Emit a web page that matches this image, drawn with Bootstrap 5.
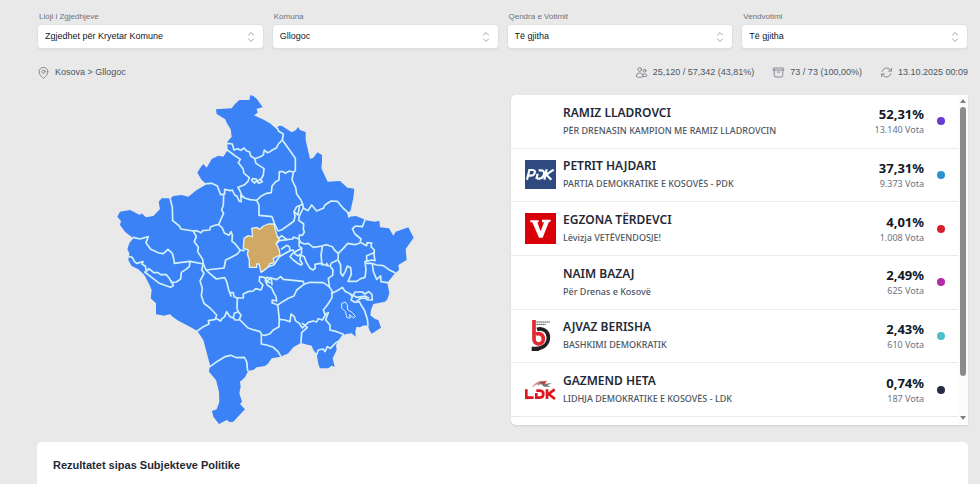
<!DOCTYPE html>
<html lang="sq">
<head>
<meta charset="utf-8">
<meta name="viewport" content="width=device-width, initial-scale=1">
<title>Rezultatet e zgjedhjeve – Gllogoc</title>
<link href="https://cdn.jsdelivr.net/npm/bootstrap@5.3.0/dist/css/bootstrap.min.css" rel="stylesheet">
<style>
  body { background: #e9e9e9; font-family: "Liberation Sans", Arial, sans-serif; color: #111827; }
  .page { padding: 11px 12px 0 37px; }
  .filter-label { font-size: 8px; line-height: 12px; color: #6b7280; padding-left: 2px; margin-bottom: 1px; display: block; }
  .filter-select {
    --bs-form-select-bg-img: url("data:image/svg+xml,%3Csvg xmlns='http://www.w3.org/2000/svg' viewBox='0 0 12 12' fill='none' stroke='%239ca3af' stroke-linecap='round' stroke-linejoin='round'%3E%3Cpath d='M3.5 4 6 1.5 8.500 4M3.500 8 6 10.500 8.500 8'/%3E%3C/svg%3E");
    font-size: 9px; line-height: 15px; padding: 4px 24px 4px 7px; color: #111827;
    border: 1px solid #dfe0e2; border-radius: 4px; background-size: 12px 12px; background-position: right 6px center;
    box-shadow: 0 1px 1px rgba(0,0,0,.06);
  }
  .info { font-size: 9px; line-height: 14px; color: #4b5563; padding: 16px 0; }
  .info svg { width: 13px; height: 13px; margin-right: 5px; fill: none; stroke: #6b7280; stroke-width: 1.5; stroke-linecap: round; stroke-linejoin: round; }
  .stats { gap: 18px; }
  .map-col { flex: 0 1 474px; min-width: 0; }
  .map-svg { width: 310px; max-width: 100%; height: auto; margin: -5px 0 0 73px; display: block; }
  .land { fill: #3b82f6; }
  .borders { fill: none; stroke: #d3f1fb; stroke-width: 5; stroke-linejoin: round; stroke-linecap: round; }
  .enclave { stroke-width: 3; }
  .chosen { fill: #d1a964; stroke: #e2f1ee; stroke-width: 4; stroke-linejoin: round; }
  .panel { background: #fff; border-radius: 5px 0 0 5px; box-shadow: 0 1px 2px rgba(0,0,0,.12); height: 330px; overflow: hidden; font-family: "Noto Sans", "Open Sans", sans-serif; }
  .results { display: grid; grid-auto-rows: 1fr; min-height: 322px; align-self: flex-start; }
  .result { border-bottom: 1px solid #e8eaed; padding: 0 13px 0 14px; }
  .logo { width: 31px; height: 31px; flex: none; margin-right: 7px; }
  .cand { font-size: 12px; line-height: 17px; font-weight: 600; color: #1f2937; }
  .party { font-size: 9px; line-height: 13px; font-weight: 500; color: #4b5563; padding: 3px 0 2px; }
  .pct { font-size: 13px; line-height: 16px; font-weight: 700; color: #111827; }
  .votes { font-size: 9px; line-height: 13px; color: #6b7280; padding-top: 1px; }
  .dot { width: 8px; height: 8px; border-radius: 50%; flex: none; margin-left: 13px; }
  .dot-violet { background: #673bd0; } .dot-blue { background: #2a93cf; } .dot-red { background: #d81e2c; }
  .dot-magenta { background: #b32ba8; } .dot-cyan { background: #4bc0cb; } .dot-navy { background: #252d45; }
  .scroll-rail { width: 10px; background: #fcfcfc; padding: 4px 0 5px; }
  .scroll-rail svg { width: 6px; height: 4px; fill: #808080; }
  .thumb { width: 6px; background: #8b8b8b; border-radius: 3px; flex: 0 0 269px; margin-top: 4px; }
  .bottom-card { background: #fff; border-radius: 5px 5px 0 0; margin-top: 12px; padding: 15px 16px 8px; }
  .bottom-card h2 { font-size: 11px; line-height: 16px; font-weight: 700; margin: 0; color: #1f2937; }
</style>
</head>
<body>
<main class="page d-flex flex-column min-vh-100">
  <form class="d-flex gap-2">
    <div class="flex-fill w-100">
      <label class="filter-label" for="lloji">Lloji i Zgjedhjeve</label>
      <select class="form-select filter-select" id="lloji"><option>Zgjedhet për Kryetar Komune</option></select>
    </div>
    <div class="flex-fill w-100">
      <label class="filter-label" for="komuna">Komuna</label>
      <select class="form-select filter-select" id="komuna"><option>Gllogoc</option></select>
    </div>
    <div class="flex-fill w-100">
      <label class="filter-label" for="qendra">Qendra e Votimit</label>
      <select class="form-select filter-select" id="qendra"><option>Të gjitha</option></select>
    </div>
    <div class="flex-fill w-100">
      <label class="filter-label" for="vendvotimi">Vendvotimi</label>
      <select class="form-select filter-select" id="vendvotimi"><option>Të gjitha</option></select>
    </div>
  </form>

  <div class="info d-flex justify-content-between align-items-center">
    <div class="d-flex align-items-center">
      <svg viewBox="0 0 24 24"><path d="M15 10.500a3 3 0 1 1-6 0 3 3 0 0 1 6 0Z"/><path d="M20 10.500c0 7-8 12-8 12s-8-5-8-12a8 8 0 0 1 16 0Z"/></svg>
      <span>Kosova &gt; Gllogoc</span>
    </div>
    <div class="stats d-flex align-items-center">
      <div class="d-flex align-items-center">
        <svg viewBox="0 0 24 24"><path d="M15 19.128a9.380 9.380 0 0 0 2.625.372 9.337 9.337 0 0 0 4.121-.952 4.125 4.125 0 0 0-7.533-2.493M15 19.128v-.003c0-1.113-.285-2.160-.786-3.070M15 19.128v.106A12.318 12.318 0 0 1 8.624 21c-2.331 0-4.512-.645-6.374-1.766l-.001-.109a6.375 6.375 0 0 1 11.964-3.070M12 6.375a3.375 3.375 0 1 1-6.750 0 3.375 3.375 0 0 1 6.750 0Zm8.250 2.250a2.625 2.625 0 1 1-5.250 0 2.625 2.625 0 0 1 5.250 0Z"/></svg>
        <span>25,120 / 57,342 (43,81%)</span>
      </div>
      <div class="d-flex align-items-center">
        <svg viewBox="0 0 24 24"><path d="m20.250 7.500-.625 10.632a2.250 2.250 0 0 1-2.247 2.118H6.622a2.250 2.250 0 0 1-2.247-2.118L3.750 7.500M10 11.250h4M3.375 7.500h17.250c.621 0 1.125-.504 1.125-1.125v-1.500c0-.621-.504-1.125-1.125-1.125H3.375c-.621 0-1.125.504-1.125 1.125v1.500c0 .621.504 1.125 1.125 1.125Z"/></svg>
        <span>73 / 73 (100,00%)</span>
      </div>
      <div class="d-flex align-items-center">
        <svg viewBox="0 0 24 24"><path d="M16.023 9.348h4.992V4.356M2.985 19.644v-4.992h4.992M2.985 14.652l3.181 3.183a8.250 8.250 0 0 0 13.803-3.700M4.031 9.865a8.250 8.250 0 0 1 13.803-3.700l3.181 3.182"/></svg>
        <span>13.10.2025 00:09</span>
      </div>
    </div>
  </div>

  <div class="d-flex">
    <div class="map-col">
      <svg class="map-svg" viewBox="0 0 930 1020" role="img" aria-label="Harta e komunave">
        <path class="land" d="M418 30 421 15 430 18 440 26 458 52 440 56 443 68 432 76 458 88 480 100 500 118 505 108 515 107 530 117 545 127 558 120 564 111 570 120 587 126 587 150 600 207 610 203 622 187 636 195 636 215 634 235 653 275 690 273 712 293 733 296 730 325 721 364 712 367 718 380 738 378 755 385 767 391 795 395 808 392 810 412 837 415 850 437 857 425 895 412 911 443 887 477 890 510 865 525 867 540 855 550 832 578 838 610 832 628 825 635 790 642 783 660 781 676 795 687 805 690 813 713 785 731 778 720 774 706 758 707 750 712 740 710 736 722 737 740 725 730 705 733 690 748 678 765 680 780 668 805 674 830 665 827 655 835 630 835 625 822 620 792 610 780 605 767 572 759 550 772 535 790 512 800 485 805 475 820 465 828 440 832 430 840 415 842 405 862 390 875 392 890 388 910 396 935 390 942 405 958 388 976 370 995 360 997 350 990 327 1002 310 980 306 963 320 958 328 935 327 905 318 870 297 845 300 825 292 795 280 750 262 723 245 713 205 692 188 680 180 673 160 677 152 675 138 673 138 640 122 625 125 600 116 580 103 555 85 538 65 528 55 510 58 490 52 478 58 460 70 445 45 425 30 405 33 393 22 380 30 365 60 360 90 375 95 370 108 382 130 378 150 357 146 335 155 325 182 325 190 318 215 315 235 320 260 300 290 283 275 270 262 248 270 235 280 222 290 233 305 207 325 197 340 200 353 180 352 155 365 140 362 118 350 98 346 88 320 72 318 58 365 55 375 42 388 30Z"/>
        <g class="borders">
          <path d="M353 160 367 162 372 180 382 176 393 181 402 174 409 182 419 186 422 198 434 206 451 200 460 195 463 180 472 188 480 185 487 180 500 173 505 162 517 150 520 132 506 124 503 116"/>
          <path d="M352 180 372 195 391 208 385 218 399 236 402 250 418 263 414 274 404 284 384 292 390 303 396 318 404 324 420 329 440 331 455 317 470 310 484 308 486 288 497 275 507 270 508 245 520 245 526 250 538 243 550 247 556 242 556 205 517 150"/>
          <path d="M434 206 438 220 462 236 460 255 452 270 457 275 446 280 440 272 434 279 425 272 427 266 439 267 442 275 451 267"/>
          <path d="M290 281 305 280 322 288 332 314 344 312 344 298 361 302 367 300 374 315 381 319 388 334 394 335 392 315 402 322"/>
          <path d="M341 312 340 345 335 360 341 370 333 387 326 404 317 405 302 410 299 420 278 422 273 428 260 422 250 423 213 417 208 408 188 392 187 352 180 325"/>
          <path d="M440 331 447 345 447 376 480 379 486 380 494 402 504 423 516 419 536 405 552 393 555 378 552 365 560 350 578 343 573 330 560 312 557 292 546 270 550 247"/>
          <path d="M552 365 564 375 568 350M578 343 580 354 594 362 605 345 620 363 640 355 645 345 663 333 682 334 697 352 713 367 717 381"/>
          <path d="M580 354 568 378 566 391 581 402 580 418 583 426 577 436 568 435 567 447 550 441 548 447 531 449 515 437 508 444 502 440"/>
          <path d="M326 404 337 414 343 429 357 436 363 425 367 435 366 454 374 460 390 480 402 482"/>
          <path d="M250 423 259 440 253 455 265 472 263 485 278 508 280 522 288 540 342 534 347 510 367 500 382 492 390 482"/>
          <path d="M70 442 90 447 115 440 108 458 122 478 147 489 160 491 174 478 187 490 192 510 193 520 215 517 240 514 280 522"/>
          <path d="M58 500 67 502 73 514 80 520 99 515 96 523 106 528 109 544 117 536 131 548 144 548 152 554 169 554 178 565 185 578 199 576 212 567 214 547 228 538 238 530 240 514"/>
          <path d="M104 546 125 562 148 580 181 592 190 587 184 573"/>
          <path d="M280 522 275 540 282 550 270 573 277 595 274 617 282 640 300 654 320 675 316 688 295 692 297 702 280 710 262 723"/>
          <path d="M288 540 299 550 319 567 344 563 350 575 356 600 363 618 360 608 370 608 372 620 382 624 400 624 400 612 414 605 430 603 437 596 453 600 459 585 448 574 449 560 463 562 472 575 480 578"/>
          <path d="M382 624 381 656 385 665 373 670 370 682 375 690 387 690 393 676 385 665M370 684 360 680 350 665 344 680 336 686 332 693 320 686"/>
          <path d="M390 690 402 702 414 714 426 718 450 725 456 735 466 736 480 731 490 720 507 710 508 688 505 660 503 645 486 638 487 630 500 633 498 620 491 608 485 594 472 585 466 572 470 562 484 565 486 584"/>
          <path d="M454 736 454 762 470 765 490 772 504 785 512 798M300 830 325 812 345 800 362 796 380 803 403 802 410 815 413 842"/>
          <path d="M460 542 476 530 492 524 508 500 526 490 540 482 538 470 530 466 515 477M540 482 550 480 555 492 565 498 575 490 574 475"/>
          <path d="M500 460 508 452 531 449M567 447 572 457 583 462 595 460 610 472 625 470 635 468 650 464 667 470 675 482 685 490 700 475 713 460 735 464 750 459 753 447 735 432 727 416 737 408 757 410 765 390"/>
          <path d="M568 450 567 468 576 475 565 480 548 490 540 500 550 510 562 519 572 525 577 522 570 510 572 495 583 500 588 515 600 535 609 540 616 534 615 523 630 520 655 528 650 520"/>
          <path d="M637 470 633 495 636 525M685 490 684 510 665 518 660 528 669 540 668 556 655 565 658 590 667 605 665 625 652 645 640 660 645 673 655 668 650 680 647 690 660 705 660 720 680 725 700 733"/>
          <path d="M684 510 692 525 692 550 698 558 706 544 712 528 722 533 724 553 714 574 740 574 752 566 765 562 768 540 765 515 785 510 795 512 792 495 793 480 783 470 785 459 771 458 770 467 755 459M793 480 792 488 770 497 770 510"/>
          <path d="M770 520 785 520 800 525 820 527 840 541 855 548M787 522 790 545 800 568 812 558 813 575 832 578"/>
          <path d="M468 575 484 564 500 569 512 560 520 568 580 574 582 583 600 577 640 578 657 590M582 583 560 600 552 618 535 625 518 635 503 645"/>
          <path d="M508 688 525 690 540 695 543 672 553 680 556 692 568 700 577 714 595 697 610 693 620 696 625 686 637 690 646 675M577 700 592 712 575 728 573 757"/>
          <path d="M620 794 625 780 640 777 645 785 652 770 661 775 678 758 688 752 700 735"/>
          <path d="M665 610 680 603 697 592 705 604 720 611 727 620 723 630 735 637 748 635 753 645 763 660 772 687 774 705"/>
          <path d="M727 620 735 606 757 606 765 612 776 605 786 613 787 630 773 630 765 624 750 626 740 634M723 613 740 622 765 618 776 624"/>
          <path class="enclave" d="M696 640 706 636 712 645 713 659 727 668 736 680 731 684 718 674 721 684 711 683 706 665 696 655Z"/>
        </g>
        <path class="chosen" d="M400 475 402 445 415 437 428 440 425 415 440 412 450 418 460 408 475 402 492 402 496 420 502 440 508 448 498 460 508 480 510 495 490 505 492 518 478 522 475 530 460 542 453 547 447 522 440 522 440 532 418 532 418 510 412 492 415 480Z"/>
      </svg>
    </div>

    <section class="panel d-flex flex-fill">
      <div class="results flex-fill">
        <div class="result d-flex align-items-center">
          <div class="logo"></div>
          <div class="flex-fill"><div class="cand">RAMIZ LLADROVCI</div><div class="party">PËR DRENASIN KAMPION ME RAMIZ LLADROVCIN</div></div>
          <div class="text-end"><div class="pct">52,31%</div><div class="votes">13.140 Vota</div></div>
          <span class="dot dot-violet"></span>
        </div>
        <div class="result d-flex align-items-center">
          <svg class="logo" viewBox="0 0 93 93"><path fill="#2f4a80" d="M0 3h93v87H0z"/><g fill="none" stroke="#fff" stroke-width="6.500"><path d="M6 62 13 33H23Q32 34 29 42 27 50 17 50H10"/><path d="M34 60 38 44M36 59H43Q54 58 57 46 59 34 48 34H41"/><path d="M65 31 58 62M86 32 64 47 79 62"/></g></svg>
          <div class="flex-fill"><div class="cand">PETRIT HAJDARI</div><div class="party">PARTIA DEMOKRATIKE E KOSOVËS - PDK</div></div>
          <div class="text-end"><div class="pct">37,31%</div><div class="votes">9.373 Vota</div></div>
          <span class="dot dot-blue"></span>
        </div>
        <div class="result d-flex align-items-center">
          <svg class="logo" viewBox="0 0 93 93"><path fill="#d90007" d="M0 0h93v93H0z"/><path fill="#fff" d="M16 22H41V28H37L47 55 57 28H51V20H77V26H72L53 74H42L22 28H16Z"/></svg>
          <div class="flex-fill"><div class="cand">EGZONA TËRDEVCI</div><div class="party">Lëvizja VETËVENDOSJE!</div></div>
          <div class="text-end"><div class="pct">4,01%</div><div class="votes">1.008 Vota</div></div>
          <span class="dot dot-red"></span>
        </div>
        <div class="result d-flex align-items-center">
          <div class="logo"></div>
          <div class="flex-fill"><div class="cand">NAIM BAZAJ</div><div class="party">Për Drenas e Kosovë</div></div>
          <div class="text-end"><div class="pct">2,49%</div><div class="votes">625 Vota</div></div>
          <span class="dot dot-magenta"></span>
        </div>
        <div class="result d-flex align-items-center">
          <svg class="logo" viewBox="0 0 93 93"><path fill="none" stroke="#231f20" stroke-width="11" d="M36 28C58 22 71 38 70 54 69 75 51 88 24 87"/><path fill="#231f20" d="M20 80H42V93H20Z"/><path fill="none" stroke="#e3262f" stroke-width="11" d="M27 0V57C27 77 55 77 55 57 55 42 42 38 33 43"/><path fill="none" stroke="#555" stroke-width="3" stroke-dasharray="5 1" d="M34 6H75M34 13H62"/></svg>
          <div class="flex-fill"><div class="cand">AJVAZ BERISHA</div><div class="party">BASHKIMI DEMOKRATIK</div></div>
          <div class="text-end"><div class="pct">2,43%</div><div class="votes">610 Vota</div></div>
          <span class="dot dot-cyan"></span>
        </div>
        <div class="result d-flex align-items-center">
          <svg class="logo" viewBox="0 0 93 93"><path fill="#e58a88" d="M20 41Q34 18 52 21L66 20 58 30 48 28Q33 31 20 41Z"/><path fill="#777" d="M36 35 48 20 62 29 81 27 67 34 77 38 57 38 48 30Z"/><path fill="#d92d2a" d="M47 25 65 21 58 30Z"/><g fill="none" stroke="#e0161c" stroke-width="8"><path d="M4 46V71H26"/><path d="M34 50H45Q55 51 55 60 55 70 45 71H34V57"/><path d="M66 46V75M89 46 71 60 90 75"/></g></svg>
          <div class="flex-fill"><div class="cand">GAZMEND HETA</div><div class="party">LIDHJA DEMOKRATIKE E KOSOVËS - LDK</div></div>
          <div class="text-end"><div class="pct">0,74%</div><div class="votes">187 Vota</div></div>
          <span class="dot dot-navy"></span>
        </div>
      </div>
      <div class="scroll-rail d-flex flex-column align-items-center">
        <svg viewBox="0 0 6 4"><path d="M3 0 6 4H0Z"/></svg>
        <div class="thumb"></div>
        <svg class="mt-auto" viewBox="0 0 6 4"><path d="M0 0H6L3 4Z"/></svg>
      </div>
    </section>
  </div>

  <section class="bottom-card flex-fill">
    <h2>Rezultatet sipas Subjekteve Politike</h2>
  </section>
</main>
<script src="https://cdn.jsdelivr.net/npm/bootstrap@5.3.0/dist/js/bootstrap.bundle.min.js"></script>
</body>
</html>
